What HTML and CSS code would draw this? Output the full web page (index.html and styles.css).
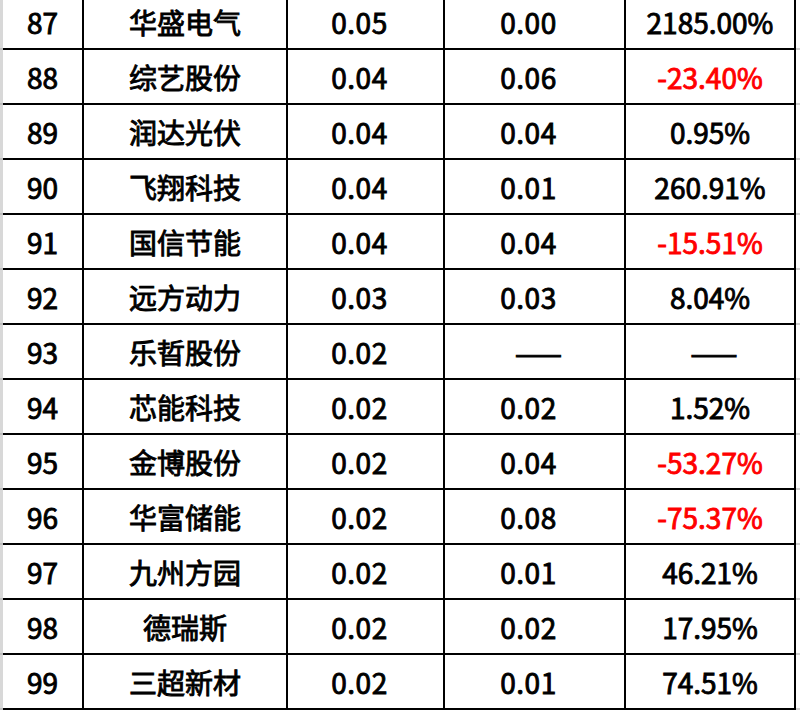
FILE: index.html
```html
<!DOCTYPE html>
<html lang="zh-CN">
<head>
<meta charset="utf-8">
<title>表格</title>
<link rel="stylesheet" href="styles.css">
</head>
<body>
<div class="sheet">
  <div class="row"><div class="gut"></div><div class="c">87</div><div class="c">华盛电气</div><div class="c num">0.05</div><div class="c num">0.00</div><div class="c">2185.00%</div><div class="tail"></div></div>
  <div class="row"><div class="gut"></div><div class="c">88</div><div class="c">综艺股份</div><div class="c num">0.04</div><div class="c num">0.06</div><div class="c neg">-23.40%</div><div class="tail"></div></div>
  <div class="row"><div class="gut"></div><div class="c">89</div><div class="c">润达光伏</div><div class="c num">0.04</div><div class="c num">0.04</div><div class="c">0.95%</div><div class="tail"></div></div>
  <div class="row"><div class="gut"></div><div class="c">90</div><div class="c">飞翔科技</div><div class="c num">0.04</div><div class="c num">0.01</div><div class="c">260.91%</div><div class="tail"></div></div>
  <div class="row"><div class="gut"></div><div class="c">91</div><div class="c">国信节能</div><div class="c num">0.04</div><div class="c num">0.04</div><div class="c neg">-15.51%</div><div class="tail"></div></div>
  <div class="row"><div class="gut"></div><div class="c">92</div><div class="c">远方动力</div><div class="c num">0.03</div><div class="c num">0.03</div><div class="c">8.04%</div><div class="tail"></div></div>
  <div class="row"><div class="gut"></div><div class="c">93</div><div class="c">乐晢股份</div><div class="c num">0.02</div><div class="c"><span class="dash">——</span></div><div class="c"><span class="dash">——</span></div><div class="tail"></div></div>
  <div class="row"><div class="gut"></div><div class="c">94</div><div class="c">芯能科技</div><div class="c num">0.02</div><div class="c num">0.02</div><div class="c">1.52%</div><div class="tail"></div></div>
  <div class="row"><div class="gut"></div><div class="c">95</div><div class="c">金博股份</div><div class="c num">0.02</div><div class="c num">0.04</div><div class="c neg">-53.27%</div><div class="tail"></div></div>
  <div class="row"><div class="gut"></div><div class="c">96</div><div class="c">华富储能</div><div class="c num">0.02</div><div class="c num">0.08</div><div class="c neg">-75.37%</div><div class="tail"></div></div>
  <div class="row"><div class="gut"></div><div class="c">97</div><div class="c">九州方园</div><div class="c num">0.02</div><div class="c num">0.01</div><div class="c">46.21%</div><div class="tail"></div></div>
  <div class="row"><div class="gut"></div><div class="c">98</div><div class="c">德瑞斯</div><div class="c num">0.02</div><div class="c num">0.02</div><div class="c">17.95%</div><div class="tail"></div></div>
  <div class="row"><div class="gut"></div><div class="c">99</div><div class="c">三超新材</div><div class="c num">0.02</div><div class="c num">0.01</div><div class="c">74.51%</div><div class="tail"></div></div>
</div>
</body>
</html>
```
FILE: styles.css
```css
html, body {
  margin: 0;
  padding: 0;
  background: #ffffff;
}
body {
  width: 800px;
  height: 712px;
  overflow: hidden;
}
.sheet {
  margin-top: -5px;
  font-family: "Noto Sans CJK SC", sans-serif;
  font-size: 28px;
  font-weight: 400;
  -webkit-text-stroke: 0.9px currentColor;
  color: #000000;
}
.row {
  display: grid;
  grid-template-columns: 3px 81px 204px 157px 181px 170px 4px;
  height: 55px;
}
.gut {
  background: #d8d8d8;
  border-bottom: 2px solid #bdbdbd;
  box-sizing: border-box;
}
.c {
  box-sizing: border-box;
  border-right: 2px solid #000000;
  border-bottom: 2px solid #000000;
  display: flex;
  align-items: center;
  justify-content: center;
  line-height: 1;
  white-space: nowrap;
}
.num {
  padding-right: 12px;
  letter-spacing: 0.5px;
}
.neg {
  color: #ff0000;
}
.dash {
  -webkit-text-stroke: 1px currentColor;
  position: relative;
  left: 4px;
}
.tail {
  box-sizing: border-box;
  border-bottom: 2px solid #d0d0d0;
}
```
